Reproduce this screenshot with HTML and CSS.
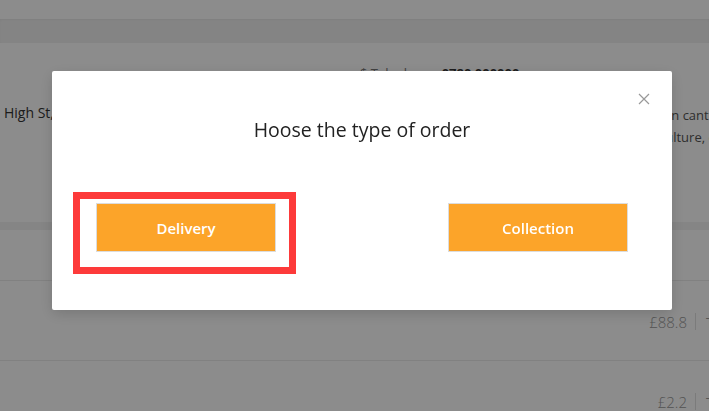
FILE: index.html
```html
<!DOCTYPE html>
<html lang="en">
<head>
  <meta charset="UTF-8" />
  <meta name="viewport" content="width=device-width, initial-scale=1.0"/>
  <title>Order</title>
  <link rel="stylesheet" href="styles.css">
</head>
<body>

<div class="topbar"></div>
<div class="tabs"></div>

<section class="shop">
  <div class="shop-addr">High St, Camden, London NW1</div>
  <div class="shop-phone"><span>&#36; Telephone:</span> <b>0780 000000</b></div>
  <div class="shop-desc">
    <p class="l1">in canton style</p>
    <p class="l2">culture, cuisine</p>
  </div>
</section>

<section class="items">
  <div class="items-head"></div>
  <div class="item">
    <span class="price">£88.8</span><span class="sep"></span><span class="unit">Total</span>
  </div>
  <div class="item">
    <span class="price">£2.2</span><span class="sep"></span><span class="unit">Total</span>
  </div>
</section>

<div class="mask">
  <div class="modal">
    <button class="close" aria-label="close">
      <svg width="12" height="12" viewBox="0 0 12 12"><path d="M1 1L11 11M11 1L1 11" stroke="#999" stroke-width="1.2" fill="none"/></svg>
    </button>
    <h2 class="modal-title">Hoose the type of order</h2>
    <div class="choices">
      <div class="choice-wrap">
        <button class="choice">Delivery</button>
        <div class="mark"></div>
      </div>
      <button class="choice">Collection</button>
    </div>
  </div>
</div>

</body>
</html>
```

FILE: styles.css
```css
body {
  margin: 0;
  font-family: "Open Sans", "Liberation Sans", sans-serif;
  background: #f2f2f2;
  color: #333;
  overflow: hidden;
  height: 411px;
}

.topbar {
  height: 19px;
  background: #fff;
}

.tabs {
  height: 24px;
  background: #f0f0f0;
  box-shadow: inset 0 1px 2px rgba(0, 0, 0, 0.04);
}

.shop {
  height: 159px;
  padding-top: 20px;
  background: #fff;
  display: grid;
  grid-template-columns: 356px 305px 60px;
  padding-left: 4px;
  margin-bottom: 8px;
  white-space: nowrap;
}

.shop-addr {
  padding-top: 40px;
  font-size: 14px;
  line-height: 20px;
  color: #333;
}

.shop-phone {
  padding-top: 1px;
  font-size: 13px;
  line-height: 18px;
  color: #777;
}

.shop-phone b {
  color: #333;
}

.shop-desc {
  padding-top: 41px;
  font-size: 13px;
  line-height: 22px;
  color: #555;
}

.shop-desc p {
  margin: 0;
}

.shop-desc .l1 {
  margin-left: 3px;
}

.shop-desc .l2 {
  margin-left: -6px;
}

.items {
  background: #fff;
}

.items-head {
  height: 50px;
  border-bottom: 1px solid #ebebeb;
}

.item {
  height: 80px;
  border-bottom: 1px solid #ebebeb;
  display: flex;
  justify-content: flex-end;
  align-items: center;
  padding-top: 2px;
  box-sizing: border-box;
}

.price {
  font-size: 15px;
  font-weight: 300;
  color: #999;
}

.sep {
  width: 1px;
  height: 17px;
  background: #e0e0e0;
  margin: 0 10px 0 8px;
}

.unit {
  width: 3px;
  font-size: 15px;
  color: #999;
  white-space: nowrap;
}

/* modal */
.mask {
  position: fixed;
  inset: 0;
  background: rgba(0, 0, 0, 0.45);
  padding: 71px 0 0 52px;
}

.modal {
  position: relative;
  width: 620px;
  height: 239px;
  box-sizing: border-box;
  padding: 46px 44px 0;
  background: #fff;
  border-radius: 2px;
  box-shadow: 0 4px 14px rgba(0, 0, 0, 0.15);
}

.close {
  position: absolute;
  top: 22px;
  right: 22px;
  padding: 0;
  border: 0;
  background: none;
  line-height: 0;
}

.modal-title {
  margin: 0 0 60px;
  font-size: 19.5px;
  line-height: 26px;
  font-weight: 400;
  text-align: center;
  color: #222;
}

.choices {
  display: flex;
  justify-content: space-between;
}

.choice-wrap {
  position: relative;
}

.choice {
  display: block;
  width: 180px;
  height: 49px;
  border: 1px solid #dcdcdc;
  background: #fca429;
  color: #fff;
  font-family: inherit;
  font-size: 15px;
  font-weight: 600;
}

.mark {
  position: absolute;
  top: -11px;
  left: -23px;
  width: 223px;
  height: 82px;
  box-sizing: border-box;
  border: 7px solid #fd3a3a;
}
```
